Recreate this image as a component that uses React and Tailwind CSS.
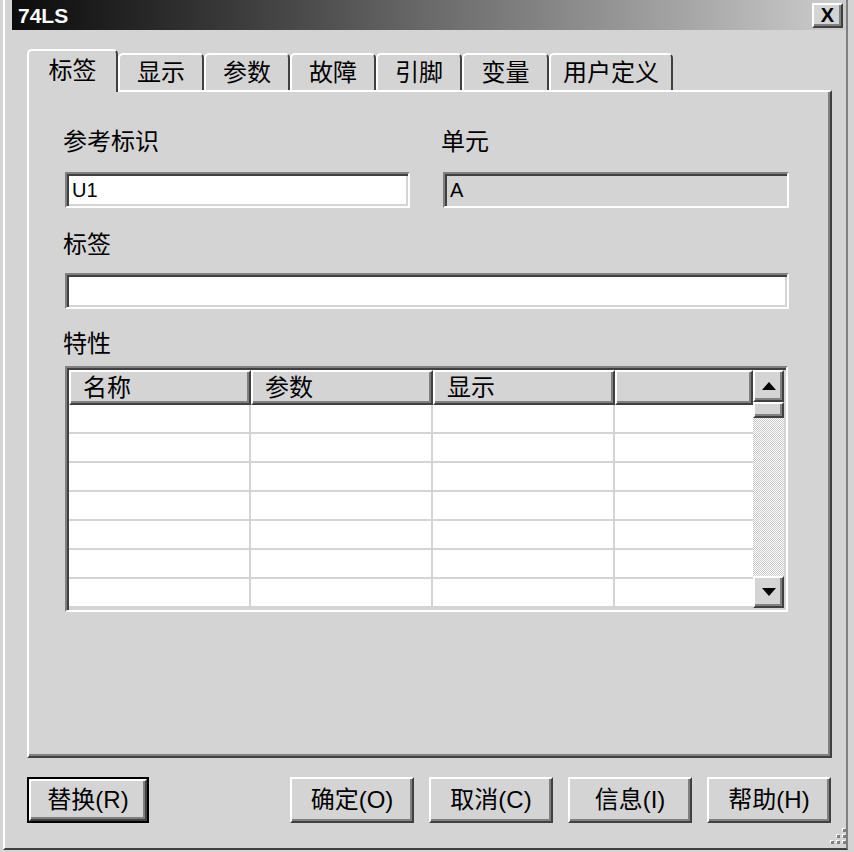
import React from 'react';

const raised =
  'border-2 border-t-white border-l-white border-r-[#404040] border-b-[#404040] shadow-[inset_-2px_-2px_0_#808080]';
const sunken =
  'border-2 border-t-[#808080] border-l-[#808080] border-r-white border-b-white shadow-[inset_2px_2px_0_#404040,inset_-2px_-2px_0_#d4d4d4]';

const tabs = [
  { label: '标签', w: 'w-[91px]' },
  { label: '显示', w: 'w-[86px]' },
  { label: '参数', w: 'w-[86px]' },
  { label: '故障', w: 'w-[86px]' },
  { label: '引脚', w: 'w-[86px]' },
  { label: '变量', w: 'w-[87px]' },
  { label: '用户定义', w: 'w-[124px]' },
];

const columns = [
  { label: '名称', w: 'w-[182px]' },
  { label: '参数', w: 'w-[182px]' },
  { label: '显示', w: 'w-[182px]' },
  { label: '', w: 'w-[138px]' },
];

function Arrow({ up }) {
  return (
    <svg width="14" height="8" viewBox="0 0 14 8">
      {up ? <polygon points="7,0 14,8 0,8" fill="#000" /> : <polygon points="0,0 14,0 7,8" fill="#000" />}
    </svg>
  );
}

function Button({ children, isDefault }) {
  if (isDefault) {
    return (
      <div className="w-[122px] h-[46px] border-2 border-black">
        <div className={`h-full flex items-center justify-center ${raised}`}>{children}</div>
      </div>
    );
  }
  return <div className={`w-[124px] h-[46px] flex items-center justify-center ${raised}`}>{children}</div>;
}

export default function App() {
  return (
    <div
      className="relative w-[854px] h-[852px] bg-[#d4d4d4] pl-[3px] pr-[6px] pb-[2px] text-black text-[24px]"
      style={{ fontFamily: "'Liberation Sans', 'Noto Sans CJK SC', sans-serif" }}
    >
      <div className="h-full flex flex-col border-l-2 border-l-white border-r-2 border-r-[#808080] border-b-2 border-b-[#404040]">
        {/* title bar */}
        <div className="ml-[7px] h-[30px] flex items-center justify-between bg-linear-to-r from-[#0c0c0c] via-[#6a6a6a] to-[#cdcdcd] pl-[6px] pr-[3px]">
          <span className="text-white font-bold text-[21px] leading-none">74LS</span>
          <div className={`w-[31px] h-[25px] bg-[#d4d4d4] flex items-center justify-center font-bold text-[20px] leading-none ${raised}`}>
            X
          </div>
        </div>

        <div className="flex flex-col pl-[22px] pr-[14px] pt-[19px]">
          {/* tabs */}
          <div className="flex items-end h-[41px]">
            {tabs.map((t, i) =>
              i === 0 ? (
                <div
                  key={t.label}
                  className={`${t.w} h-[43px] -mb-[2px] relative z-10 bg-[#d4d4d4] flex items-center justify-center border-t-2 border-l-2 border-white border-r-2 border-r-[#404040] rounded-t-[5px] pb-[2px]`}
                >
                  {t.label}
                </div>
              ) : (
                <div
                  key={t.label}
                  className={`${t.w} h-[37px] flex items-center justify-center border-t-2 border-l-2 border-white border-r-2 border-r-[#404040] rounded-t-[5px]`}
                >
                  {t.label}
                </div>
              )
            )}
          </div>

          {/* panel */}
          <div className={`h-[668px] pl-[36px] pt-[38px] ${raised}`}>
            <div className="grid grid-cols-[345px_346px] gap-x-[33px]">
              <div className="h-[24px] leading-[24px] -ml-[2px]">参考标识</div>
              <div className="h-[24px] leading-[24px] -ml-[2px]">单元</div>
              <div className={`mt-[18px] h-[36px] bg-white flex items-center pl-[5px] text-[20px] ${sunken}`}>U1</div>
              <div className={`mt-[18px] h-[36px] bg-[#d4d4d4] flex items-center pl-[5px] text-[20px] ${sunken}`}>A</div>
            </div>

            <div className="mt-[25px] h-[24px] leading-[24px] -ml-[2px]">标签</div>
            <div className={`mt-[16px] w-[724px] h-[36px] bg-white ${sunken}`} />

            <div className="mt-[23px] h-[24px] leading-[24px] -ml-[2px]">特性</div>

            {/* property table */}
            <div className={`mt-[10px] w-[723px] h-[246px] bg-white flex p-[2px] ${sunken}`}>
              <div className="flex flex-col">
                <div className="flex h-[35px]">
                  {columns.map((c, i) => (
                    <div key={i} className={`${c.w} h-full pl-[12px] flex items-center bg-[#d4d4d4] ${raised}`}>
                      {c.label}
                    </div>
                  ))}
                </div>
                {[0, 1, 2, 3, 4, 5, 6].map((r) => (
                  <div key={r} className="flex h-[29px] border-b-2 border-[#d4d4d4] first:border-t-2 first:h-[31px]">
                    {columns.map((c, i) => (
                      <div key={i} className={`${c.w} h-full ${i < 3 ? 'border-r-2 border-[#d4d4d4]' : ''}`} />
                    ))}
                  </div>
                ))}
              </div>

              {/* scrollbar */}
              <div className="w-[33px] flex flex-col">
                <div className={`h-[32px] bg-[#d4d4d4] flex items-center justify-center ${raised}`}>
                  <Arrow up />
                </div>
                <div className={`h-[16px] bg-[#d4d4d4] ${raised}`} />
                <div className="flex-1 bg-[repeating-conic-gradient(#c8c8c8_0_25%,#ffffff_0_50%)] bg-size-[2px_2px]" />
                <div className={`h-[32px] bg-[#d4d4d4] flex items-center justify-center ${raised}`}>
                  <Arrow />
                </div>
              </div>
            </div>
          </div>

          {/* buttons */}
          <div className="mt-[19px] flex justify-between">
            <Button isDefault>替换(R)</Button>
            <div className="flex gap-[15px] pr-[1px]">
              <Button>确定(O)</Button>
              <Button>取消(C)</Button>
              <Button>信息(I)</Button>
              <Button>帮助(H)</Button>
            </div>
          </div>
        </div>
      </div>

      {/* size grip */}
      <svg className="absolute right-[6px] bottom-[6px]" width="18" height="18" viewBox="0 0 18 18">
        {[
          [12, 0],
          [6, 6],
          [12, 6],
          [0, 12],
          [6, 12],
          [12, 12],
        ].map(([x, y]) => (
          <g key={`${x}-${y}`}>
            <rect x={x} y={y} width="3" height="3" fill="#ffffff" />
            <rect x={x + 1} y={y + 1} width="3" height="3" fill="#808080" />
          </g>
        ))}
      </svg>
    </div>
  );
}
